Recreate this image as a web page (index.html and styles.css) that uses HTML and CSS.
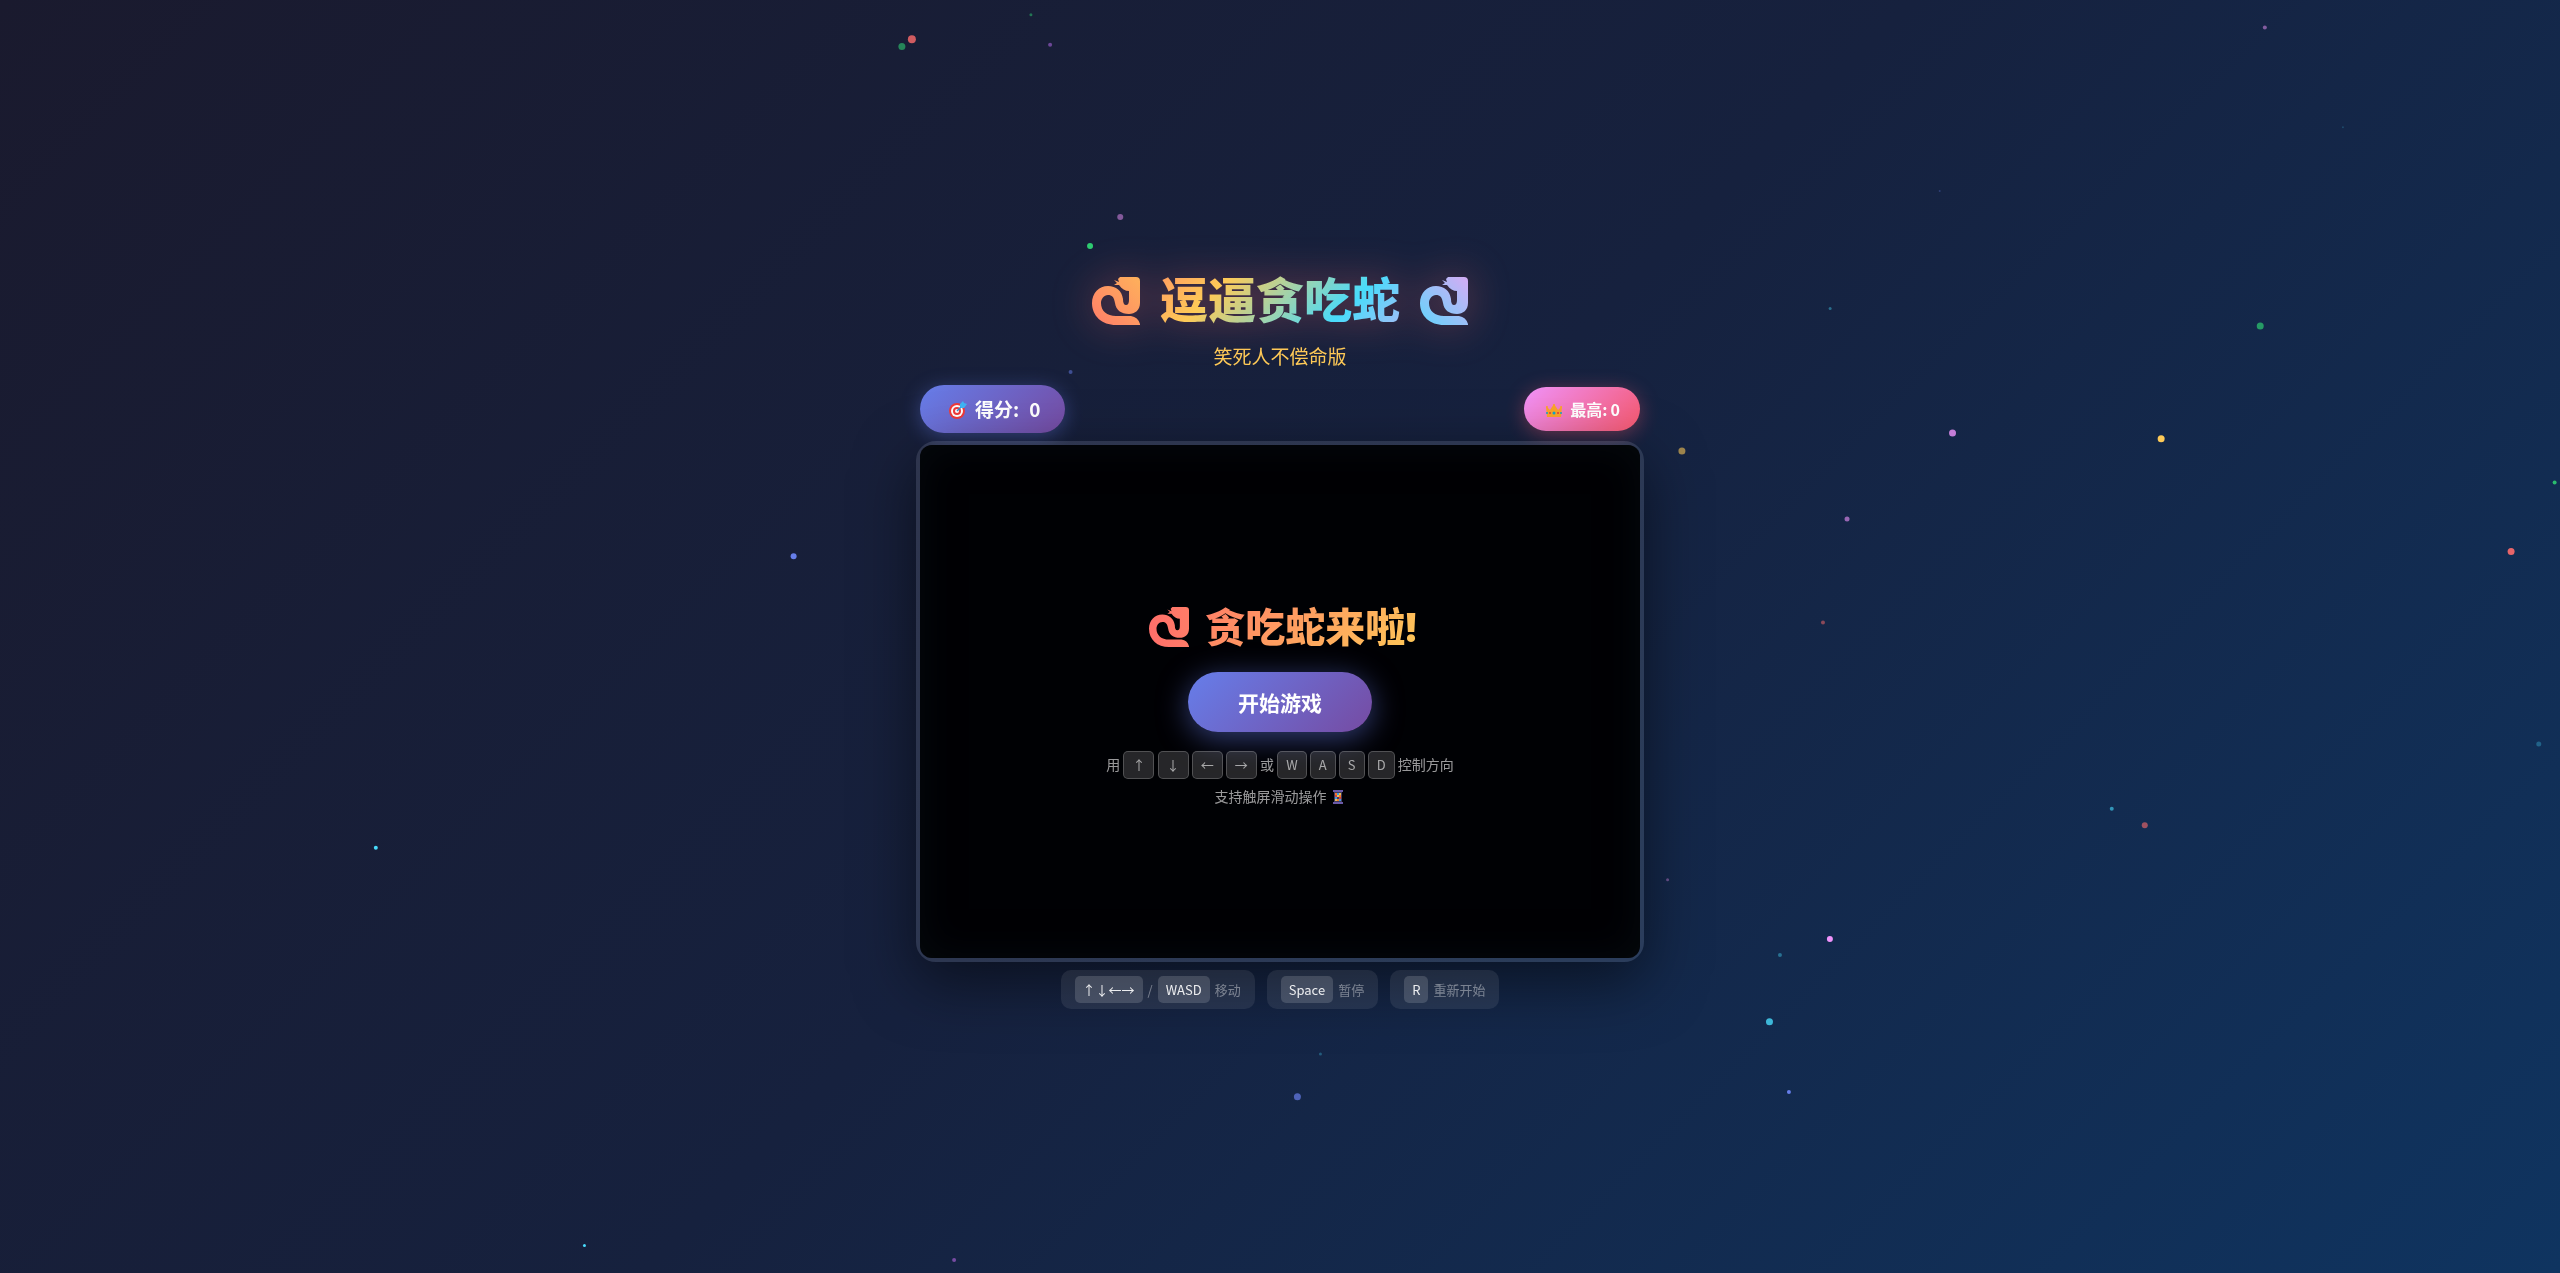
FILE: index.html
```
<!DOCTYPE html>
<html lang="zh-CN">
<head>
<meta charset="UTF-8">
<meta name="viewport" content="width=device-width, initial-scale=1.0">
<title>逗逼贪吃蛇</title>
<link rel="stylesheet" href="styles.css">
</head>
<body>
<svg class="defs" width="0" height="0" aria-hidden="true">
	<linearGradient id="warm" x1="0" y1="1" x2="1" y2="0">
		<stop offset="0" stop-color="#ff7d69"/>
		<stop offset="1" stop-color="#feb15b"/>
	</linearGradient>
	<linearGradient id="cool" x1="0" y1="1" x2="1" y2="0">
		<stop offset="0" stop-color="#62d4fc"/>
		<stop offset="1" stop-color="#d5acf4"/>
	</linearGradient>
	<linearGradient id="red" x1="0" y1="0" x2="1" y2="0">
		<stop offset="0" stop-color="#ff6f6a"/>
		<stop offset="1" stop-color="#ff7c68"/>
	</linearGradient>
	<symbol id="snake" viewBox="0 0 48 48">
		<path d="M24 48C10 48 0 39 0 26C0 16 7 9 16 9C24 9 30 14 31 22C31 26 32 28 34 28C36 28 37 26 37 23V14C33 14 30 12 27 8L22 8L25 6L22 3L27 5L26 2L28 0H44Q48 0 48 4V26C48 33 43 37 37 37C29 37 24 33 23 26C22 20 20 18 16 18C12 18 9 22 9 26C9 34 15 39 24 39H39Q46 40 48 47V48Z"/>
	</symbol>
</svg>
<canvas id="particles"></canvas>
<div class="container">
	<h1 class="title"><svg fill="url(#warm)"><use href="#snake"/></svg>逗逼贪吃蛇<svg fill="url(#cool)"><use href="#snake"/></svg></h1>
	<p class="subtitle">笑死人不偿命版</p>
	<div class="score-board">
		<div class="score">
			<svg viewBox="0 0 24 20">
				<circle cx="12" cy="12" r="8" fill="#f03a3a"/>
				<circle cx="12" cy="12" r="6" fill="#fff"/>
				<circle cx="12" cy="12" r="4" fill="#f03a3a"/>
				<circle cx="12" cy="12" r="2" fill="#fff"/>
				<path d="M12 12L17 7" stroke="#2a8fd0" stroke-width="1.5"/>
				<path d="M15 8V5L18 2L19 4L22 5L19 9H16Z" fill="#3fb4f5"/>
			</svg>得分: <span id="score">0</span>
		</div>
		<div class="score best">
			<svg viewBox="0 0 20 20">
				<path d="M2 7L6 11L10 5L14 11L18 7L17 18H3Z" fill="#fba528"/>
				<circle cx="3" cy="8" r="1" fill="#fba528"/>
				<circle cx="10" cy="6" r="1" fill="#fba528"/>
				<circle cx="17" cy="8" r="1" fill="#fba528"/>
				<circle cx="10" cy="14" r="1.5" fill="#12a5c8"/>
				<circle cx="6" cy="14" r="1" fill="#e03c3c"/>
				<circle cx="14" cy="14" r="1" fill="#e03c3c"/>
				<circle cx="3" cy="14" r="1" fill="#12a5c8"/>
				<circle cx="17" cy="14" r="1" fill="#12a5c8"/>
			</svg>最高: <span id="best">0</span>
		</div>
	</div>
	<div class="game">
		<div class="overlay">
			<h2><svg fill="url(#red)"><use href="#snake"/></svg>贪吃蛇来啦!</h2>
			<button class="btn" id="start">开始游戏</button>
			<p class="help">用 <kbd>↑</kbd> <kbd>↓</kbd> <kbd>←</kbd> <kbd>→</kbd> 或 <kbd>W</kbd> <kbd>A</kbd> <kbd>S</kbd> <kbd>D</kbd> 控制方向<br>支持触屏滑动操作 <svg viewBox="0 0 16 14">
				<path d="M4 0H12V14H4Z" fill="#453c5c"/>
				<path d="M3 0H13V2H3ZM3 12H13V14H3Z" fill="#6a5aa8"/>
				<path d="M5 3H7V5H5ZM9 5H11V7H9ZM7 9H9V11H7Z" fill="#f47a2c"/>
				<path d="M7 3H9V5H7ZM5 7H7V9H5ZM9 9H11V11H9Z" fill="#3f9be0"/>
				<path d="M9 3H11V5H9ZM7 5H9V7H7ZM5 9H7V11H5Z" fill="#e8c05a"/>
				<path d="M5 5H7V7H5ZM9 7H11V9H9Z" fill="#d8433c"/>
			</svg></p>
		</div>
	</div>
	<div class="hints">
		<div class="hint"><span class="key">↑↓←→</span> / <span class="key">WASD</span> 移动</div>
		<div class="hint"><span class="key">Space</span> 暂停</div>
		<div class="hint"><span class="key">R</span> 重新开始</div>
	</div>
</div>
<script src="script.js"></script>
</body>
</html>
```
FILE: styles.css
```
* {
	margin: 0;
	padding: 0;
	box-sizing: border-box;
}
body {
	min-height: 100vh;
	display: flex;
	justify-content: center;
	align-items: center;
	background: linear-gradient(135deg, #1a1a2e 0%, #16213e 50%, #0f3460 100%);
	font-family: "Noto Sans CJK SC", "Noto Sans", sans-serif;
	color: #fff;
	overflow: hidden;
}
.defs {
	position: absolute;
}
#particles {
	position: fixed;
	left: 0;
	top: 0;
	width: 100%;
	height: 100%;
	pointer-events: none;
}
.container {
	position: relative;
	display: flex;
	flex-direction: column;
	align-items: center;
	width: 100%;
	max-width: 728px;
}
.title {
	display: flex;
	align-items: center;
	gap: 20px;
	font-family: "Noto Sans", "Noto Sans CJK SC", sans-serif;
	font-size: 48px;
	line-height: 70px;
	font-weight: 900;
	background: linear-gradient(135deg, #ff6b6b, #feca57, #48dbfb, #ff9ff3);
	-webkit-background-clip: text;
	background-clip: text;
	-webkit-text-fill-color: transparent;
	filter: drop-shadow(0 0 20px rgba(255, 107, 107, 0.4));
}
.title svg {
	width: 48px;
	height: 48px;
	margin-top: 2px;
}
.subtitle {
	font-family: "Noto Sans", "Noto Sans CJK SC", sans-serif;
	font-size: 19px;
	line-height: 28px;
	margin: 8px 0 14px;
	color: #feca57;
}
.score-board {
	display: flex;
	justify-content: space-between;
	align-items: center;
	width: 100%;
	padding: 0 4px;
	margin-bottom: 8px;
}
.score {
	display: flex;
	align-items: center;
	padding: 10px 25px;
	font-size: 19px;
	line-height: 28px;
	font-weight: 700;
	border-radius: 50px;
	background: linear-gradient(135deg, #667eea, #764ba2);
	box-shadow: 0 4px 20px rgba(102, 126, 234, 0.4);
}
.score svg {
	width: 24px;
	height: 20px;
	margin-right: 6px;
}
.score span {
	margin-left: 10px;
}
.best {
	padding: 10px 20px;
	font-size: 16px;
	line-height: 24px;
	background: linear-gradient(135deg, #f093fb, #f5576c);
	box-shadow: 0 4px 20px rgba(245, 87, 108, 0.4);
}
.best svg {
	width: 20px;
}
.best span {
	margin-left: 3px;
}
.game {
	width: 100%;
	border: 4px solid rgba(255, 255, 255, 0.1);
	border-radius: 20px;
	box-shadow: 0 20px 60px rgba(0, 0, 0, 0.5);
}
.overlay {
	display: flex;
	flex-direction: column;
	align-items: center;
	justify-content: center;
	aspect-ratio: 720 / 513;
	padding-top: 8px;
	border-radius: 12px;
	background: #000104;
	box-shadow: inset 0 0 40px rgba(10, 20, 24, 0.5);
}
.overlay h2 {
	display: flex;
	align-items: center;
	gap: 16px;
	padding-left: 6px;
	font-family: "Noto Sans", "Noto Sans CJK SC", sans-serif;
	font-size: 40px;
	line-height: 58px;
	font-weight: 900;
	margin-bottom: 16px;
	background: linear-gradient(135deg, #ff6b6b, #feca57);
	-webkit-background-clip: text;
	background-clip: text;
	-webkit-text-fill-color: transparent;
}
.overlay h2 svg {
	width: 40px;
	height: 40px;
}
.btn {
	padding: 15px 50px;
	font-family: inherit;
	font-size: 21px;
	line-height: 30px;
	font-weight: 700;
	color: #fff;
	border: none;
	border-radius: 50px;
	background: linear-gradient(135deg, #667eea, #764ba2);
	box-shadow: 0 6px 30px rgba(102, 126, 234, 0.5);
	cursor: pointer;
}
.help {
	margin-top: 16px;
	font-size: 14px;
	line-height: 32px;
	text-align: center;
	color: rgba(255, 255, 255, 0.6);
}
.help svg {
	width: 16px;
	height: 14px;
	vertical-align: -2px;
}
kbd {
	display: inline-block;
	padding: 2px 8px;
	font-family: inherit;
	font-size: 13px;
	line-height: 22px;
	border: 1px solid rgba(255, 255, 255, 0.2);
	border-radius: 5px;
	background: rgba(255, 255, 255, 0.15);
}
.hints {
	display: flex;
	gap: 12px;
	margin-top: 8px;
}
.hint {
	display: flex;
	gap: 5px;
	padding: 6px 14px;
	font-size: 13px;
	line-height: 27px;
	border-radius: 10px;
	color: rgba(255, 255, 255, 0.4);
	background: rgba(255, 255, 255, 0.08);
}
.key {
	padding: 0 8px;
	border-radius: 5px;
	color: rgba(255, 255, 255, 0.9);
	background: rgba(255, 255, 255, 0.15);
}
```
FILE: script.js
```
var canvas = document.getElementById("particles"), ctx = canvas.getContext("2d");
// x and y as parts of the window, radius, colour, alpha
var dots = [
	[0.3562, 0.0308, 4, "#ff6b6b", 0.8],
	[0.3523, 0.0365, 3.5, "#2ecc71", 0.6],
	[0.4027, 0.0115, 1.5, "#2ecc71", 0.5],
	[0.4102, 0.0352, 2, "#764ba2", 0.9],
	[0.8847, 0.0217, 2, "#f093fb", 0.5],
	[0.9152, 0.1, 1, "#48dbfb", 0.2],
	[0.7577, 0.15, 1, "#667eea", 0.3],
	[0.4376, 0.1705, 3, "#f093fb", 0.5],
	[0.4258, 0.1932, 3, "#2ecc71", 1],
	[0.7149, 0.2423, 1.5, "#48dbfb", 0.4],
	[0.8829, 0.256, 3.5, "#2ecc71", 0.7],
	[0.4182, 0.2923, 2, "#667eea", 0.5],
	[0.7627, 0.3402, 3.5, "#f093fb", 0.8],
	[0.8442, 0.3447, 3.5, "#feca57", 1],
	[0.657, 0.3543, 3.5, "#feca57", 0.6],
	[0.9979, 0.379, 2, "#2ecc71", 0.9],
	[0.7215, 0.4077, 2.5, "#f093fb", 0.6],
	[0.9809, 0.4333, 3.5, "#ff6b6b", 0.9],
	[0.31, 0.437, 3, "#667eea", 1],
	[0.7121, 0.489, 2, "#ff6b6b", 0.5],
	[0.9917, 0.5845, 2.5, "#48dbfb", 0.3],
	[0.8249, 0.6354, 2, "#48dbfb", 0.6],
	[0.8378, 0.6482, 3, "#ff6b6b", 0.6],
	[0.1468, 0.666, 2, "#48dbfb", 1],
	[0.6514, 0.691, 1.5, "#f093fb", 0.4],
	[0.7148, 0.7376, 3, "#f093fb", 1],
	[0.6953, 0.7502, 2, "#48dbfb", 0.4],
	[0.6912, 0.8026, 3.5, "#48dbfb", 0.8],
	[0.5158, 0.828, 1.5, "#48dbfb", 0.3],
	[0.6988, 0.8578, 2, "#667eea", 1],
	[0.5068, 0.8616, 3.5, "#667eea", 0.7],
	[0.2283, 0.9784, 1.5, "#48dbfb", 1],
	[0.3727, 0.9898, 2, "#764ba2", 1]
];
function draw() {
	canvas.width = window.innerWidth, canvas.height = window.innerHeight;
	for (var i = 0; i < dots.length; i++) {
		var d = dots[i];
		ctx.globalAlpha = d[4];
		ctx.fillStyle = d[3];
		ctx.beginPath();
		ctx.arc(d[0] * canvas.width, d[1] * canvas.height, d[2], 0, Math.PI * 2);
		ctx.fill();
	}
}
window.addEventListener("resize", draw);
draw();
```
